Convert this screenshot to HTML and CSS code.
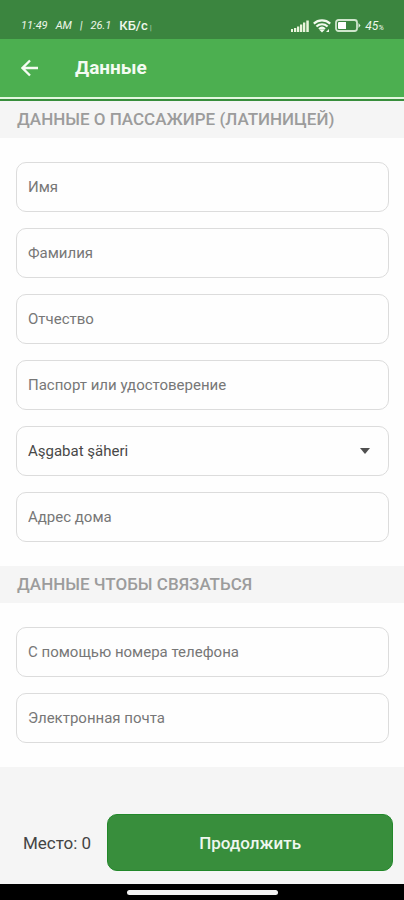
FILE: index.html
```html
<!DOCTYPE html>
<html lang="ru">
<head>
<meta charset="utf-8">
<meta name="viewport" content="width=device-width, initial-scale=1">
<title>Данные</title>
<link rel="stylesheet" href="styles.css">
</head>
<body>
<div class="status">
  <div class="status-group status-text">
    <span>11:49</span><span>AM</span><span>|</span><span>26.1</span><span class="unit">КБ/с<i class="tick">|</i></span>
  </div>
  <div class="status-group status-icons">
    <svg width="18" height="12" viewBox="0 0 18 12" fill="#eaf5dc" aria-hidden="true">
      <path d="M0 9h2v3H0zM3 8h2.300v4H3zM6 6.500h2.300V12H6zM9 4.500h2.300V12H9zM12 2.500h2.300V12H12zM15.300 .5h2.500V12h-2.500z"/>
    </svg>
    <svg width="18" height="14" viewBox="0 0 18 14" fill="none" stroke="#f2faee" stroke-width="2.200" aria-hidden="true">
      <path d="M.8 4.600C5.500 .4 12.500 .4 17.200 4.600M3.400 7.500c3.300-2.900 7.900-2.900 11.200 0M6 10c1.800-1.500 4.200-1.500 6 0"/>
      <path d="M6.500 11L9 13.500l2.500-2.500c-1.500-.9-3.500-.9-5 0z" fill="#f2faee" stroke="none"/>
      <path d="M13 13h3v-3z" fill="#f2faee" stroke="none"/>
    </svg>
    <svg width="26" height="13" viewBox="0 0 26 13" fill="none" aria-hidden="true">
      <rect x="1" y="1" width="21" height="11" rx="2.500" stroke="#cfe6cc" stroke-width="1.800"/>
      <path d="M4 3h7v7H4a1 1 0 0 1-1-1V4a1 1 0 0 1 1-1z" fill="#fff"/>
      <path d="M23.500 4l2 2.500-2 2.500z" fill="#e3f2e0"/>
    </svg>
    <span class="percent">45<small>%</small></span>
  </div>
</div>

<header class="appbar">
  <button class="back" type="button" aria-label="Назад">
    <svg width="18" height="18" viewBox="0 0 18 18" fill="none" stroke="#f4fbf2" stroke-width="2.300" aria-hidden="true">
      <path d="M17 9H2M9 1.500L1.500 9 9 16.500"/>
    </svg>
  </button>
  <h1>Данные</h1>
</header>

<form class="form">
  <h2>ДАННЫЕ О ПАССАЖИРЕ (ЛАТИНИЦЕЙ)</h2>
  <div class="fields">
    <input type="text" placeholder="Имя" aria-label="Имя">
    <input type="text" placeholder="Фамилия" aria-label="Фамилия">
    <input type="text" placeholder="Отчество" aria-label="Отчество">
    <input type="text" placeholder="Паспорт или удостоверение" aria-label="Паспорт или удостоверение">
    <div class="select">
      <select aria-label="Город"><option>Aşgabat şäheri</option></select>
      <svg class="caret" width="10" height="6" viewBox="0 0 10 6" aria-hidden="true"><path d="M0 0h10L5 6z" fill="#505050"/></svg>
    </div>
    <input type="text" placeholder="Адрес дома" aria-label="Адрес дома">
  </div>

  <h2>ДАННЫЕ ЧТОБЫ СВЯЗАТЬСЯ</h2>
  <div class="fields">
    <input type="tel" placeholder="С помощью номера телефона" aria-label="С помощью номера телефона">
    <input type="email" placeholder="Электронная почта" aria-label="Электронная почта">
  </div>

  <div class="actions">
    <span class="seat">Место: 0</span>
    <button class="submit" type="button">Продолжить</button>
  </div>
</form>

<div class="navbar"><span class="pill"></span></div>
</body>
</html>
```

FILE: styles.css
```css
* {
  box-sizing: border-box;
}

body {
  margin: 0;
  min-height: 100vh;
  display: flex;
  flex-direction: column;
  background: #f5f5f5;
  color: #444;
  font-family: Roboto, "Noto Sans", sans-serif;
}

.status {
  display: flex;
  justify-content: space-between;
  height: 39px;
  padding: 12px 20px 0 21px;
  background: #3b853f;
  color: #eef7ea;
}

.status-group {
  display: flex;
  align-items: center;
  height: 27px;
}

.status-text {
  gap: 8px;
  font-size: 11px;
  font-style: italic;
}

.unit {
  font-size: 13px;
  font-style: normal;
  font-weight: 500;
}

.tick {
  margin-left: 2px;
  font-size: 8px;
  font-style: normal;
  opacity: 0.6;
}

.status-icons {
  gap: 4px;
}

.percent {
  font-size: 12px;
  font-style: italic;
}

.percent small {
  font-size: 8px;
}

.appbar {
  display: flex;
  align-items: center;
  gap: 36px;
  height: 62px;
  padding-left: 21px;
  background: #4caf50;
  border-bottom: 2px solid #388e3c;
  box-shadow: inset 0 -2px #e2f7df;
}

.back {
  display: flex;
  padding: 0 0 2px;
  border: 0;
  background: none;
}

h1 {
  margin: 0;
  padding-bottom: 2px;
  color: #f4fbf2;
  font-size: 19px;
  font-weight: 700;
  line-height: 24px;
}

.form {
  flex: 1;
  display: flex;
  flex-direction: column;
}

h2 {
  margin: 0;
  padding: 0 17px;
  color: #9c9c9c;
  background: #f5f5f5;
  font-size: 17px;
  font-weight: 500;
  line-height: 37px;
}

.fields {
  display: flex;
  flex-direction: column;
  gap: 16px;
  padding: 24px 15px 24px 16px;
  background: #fefefe;
}

input,
select {
  width: 100%;
  height: 50px;
  padding: 0 11px;
  border: 1px solid #dcdcdc;
  border-radius: 10px;
  background: #fefefe;
  color: #484848;
  font-family: inherit;
  font-size: 15px;
}

select {
  display: block;
  appearance: none;
}

input::placeholder {
  color: #777;
  opacity: 1;
}

.select {
  position: relative;
}

.caret {
  position: absolute;
  top: 22px;
  right: 19px;
  pointer-events: none;
}

.actions {
  display: flex;
  align-items: center;
  gap: 16px;
  margin-top: auto;
  padding: 0 11px 13px 23px;
}

.seat {
  font-size: 17px;
}

.submit {
  flex: 1;
  height: 57px;
  border: 1px solid #22882a;
  border-radius: 10px;
  background: #388e3c;
  color: #eef7ee;
  font-family: inherit;
  font-size: 17px;
  font-weight: 500;
}

.navbar {
  display: flex;
  align-items: center;
  justify-content: center;
  height: 16px;
  background: #000;
}

.pill {
  width: 151px;
  height: 5px;
  border-radius: 3px;
  background: #f4f4f4;
}
```
